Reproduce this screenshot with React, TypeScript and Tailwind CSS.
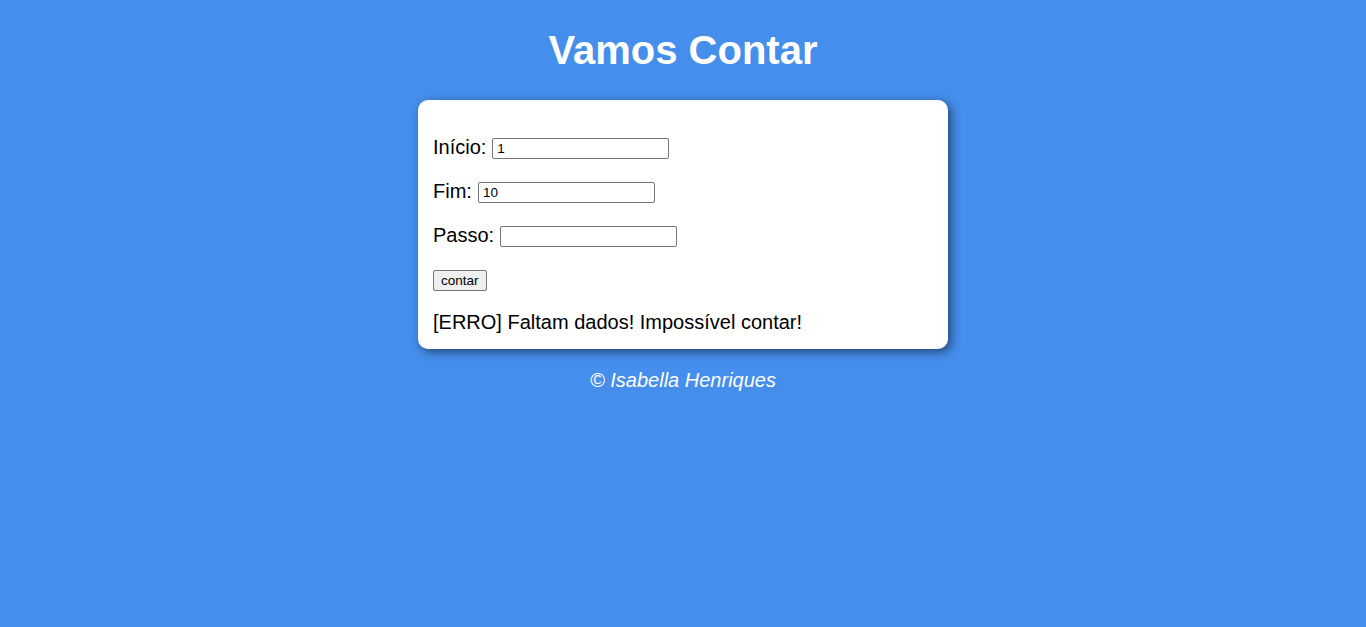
import React, { useState } from "react";

const App = () => {
    const [inicio, setInicio] = useState("1");
    const [fim, setFim] = useState("10");
    const [passo, setPasso] = useState("");
    const [res, setRes] = useState("[ERRO] Faltam dados! Impossível contar!");

    const contar = () => {
        if (!inicio || !fim || !passo) {
            setRes("[ERRO] Faltam dados! Impossível contar!");
            return;
        }
        const i = Number(inicio);
        const f = Number(fim);
        let p = Math.abs(Number(passo)) || 1;
        const out: number[] = [];
        if (i <= f) for (let c = i; c <= f; c += p) out.push(c);
        else for (let c = i; c >= f; c -= p) out.push(c);
        setRes("Contando: " + out.join(" \u{1F449} ") + " \u{1F3C1}");
    };

    const inputCls =
        "ml-[6px] w-[177px] h-[21px] border border-[#767676] rounded-[2px] bg-white pl-[4px] pr-[2px] text-[13.5px] text-black outline-none";

    return (
        <div className="min-h-[627px] bg-[#458eeb] font-['Liberation_Sans',Arial,sans-serif] flow-root">
            <header>
                <h1 className="text-center text-white font-bold text-[40px] leading-[46px] my-[27px]">
                    Vamos Contar
                </h1>
            </header>

            <section className="w-[530px] mx-auto bg-white rounded-[10px] p-[15px] shadow-[3px_3px_10px_rgba(0,0,0,0.5)] text-black text-[20px]">
                <p className="my-[20px] h-[24px] flex items-end">
                    <span className="leading-[23px]">Início:</span>
                    <input
                        type="number"
                        value={inicio}
                        onChange={(e) => setInicio(e.target.value)}
                        className={inputCls}
                    />
                </p>
                <p className="my-[20px] h-[24px] flex items-end">
                    <span className="leading-[23px]">Fim:</span>
                    <input
                        type="number"
                        value={fim}
                        onChange={(e) => setFim(e.target.value)}
                        className={inputCls}
                    />
                </p>
                <p className="my-[20px] h-[24px] flex items-end">
                    <span className="leading-[23px]">Passo:</span>
                    <input
                        type="number"
                        value={passo}
                        onChange={(e) => setPasso(e.target.value)}
                        className={inputCls}
                    />
                </p>
                <p className="my-[20px] h-[24px] flex items-end">
                    <button
                        onClick={contar}
                        className="h-[21px] px-[7px] border border-[#767676] rounded-[2px] bg-[#efefef] text-[13.5px] leading-none text-black"
                    >
                        contar
                    </button>
                </p>
                <div className="leading-[23px]">{res}</div>
            </section>

            <footer>
                <p className="text-center text-white italic text-[20px] leading-[23px] my-[20px]">
                    &copy; Isabella Henriques
                </p>
            </footer>
        </div>
    );
};

export default App;
